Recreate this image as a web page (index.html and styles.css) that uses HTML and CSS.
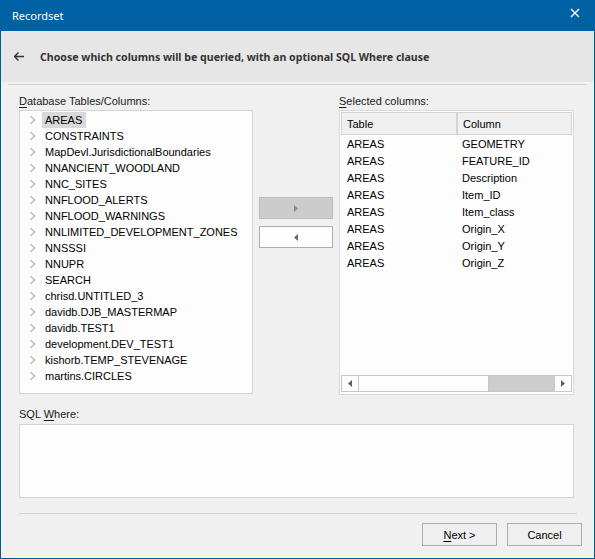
FILE: index.html
```html
<!DOCTYPE html>
<html lang="en">
  <head>
    <meta charset="UTF-8" />
    <title>Recordset</title>
    <link rel="stylesheet" href="styles.css">
  </head>
  <body>
    <div class="window">
      <div class="titlebar">
        <span class="title">Recordset</span>
        <svg class="close" width="10" height="10" viewBox="0 0 10 10">
          <path d="M1 1 L9 9 M9 1 L1 9" stroke="#fff" stroke-width="1.4" fill="none" />
        </svg>
      </div>
      <div class="banner">
        <svg class="back" width="10" height="9" viewBox="0 0 10 9">
          <path d="M0.5 4.5 H10 M4.5 0.5 L0.5 4.5 L4.5 8.5" stroke="#333" stroke-width="1.4" fill="none" />
        </svg>
        <span class="banner-text">Choose which columns will be queried, with an optional SQL Where clause</span>
      </div>
      <div class="rule"></div>
      <div class="content">
        <div class="pickers">
          <div class="pane">
            <div class="label"><u>D</u>atabase Tables/Columns:</div>
            <ul class="tree">
              <li><span class="chev"></span><span class="node selected">AREAS</span></li>
              <li><span class="chev"></span><span class="node">CONSTRAINTS</span></li>
              <li><span class="chev"></span><span class="node">MapDevl.JurisdictionalBoundaries</span></li>
              <li><span class="chev"></span><span class="node">NNANCIENT_WOODLAND</span></li>
              <li><span class="chev"></span><span class="node">NNC_SITES</span></li>
              <li><span class="chev"></span><span class="node">NNFLOOD_ALERTS</span></li>
              <li><span class="chev"></span><span class="node">NNFLOOD_WARNINGS</span></li>
              <li><span class="chev"></span><span class="node">NNLIMITED_DEVELOPMENT_ZONES</span></li>
              <li><span class="chev"></span><span class="node">NNSSSI</span></li>
              <li><span class="chev"></span><span class="node">NNUPR</span></li>
              <li><span class="chev"></span><span class="node">SEARCH</span></li>
              <li><span class="chev"></span><span class="node">chrisd.UNTITLED_3</span></li>
              <li><span class="chev"></span><span class="node">davidb.DJB_MASTERMAP</span></li>
              <li><span class="chev"></span><span class="node">davidb.TEST1</span></li>
              <li><span class="chev"></span><span class="node">development.DEV_TEST1</span></li>
              <li><span class="chev"></span><span class="node">kishorb.TEMP_STEVENAGE</span></li>
              <li><span class="chev"></span><span class="node">martins.CIRCLES</span></li>
            </ul>
          </div>
          <div class="movers">
            <button class="mover disabled">
              <svg width="4" height="7" viewBox="0 0 4 7"><path d="M0 0 L4 3.5 L0 7 Z" fill="#8c8c8c" /></svg>
            </button>
            <button class="mover">
              <svg width="4" height="7" viewBox="0 0 4 7"><path d="M4 0 L0 3.5 L4 7 Z" fill="#6a6a6a" /></svg>
            </button>
          </div>
          <div class="pane">
            <div class="label"><u>S</u>elected columns:</div>
            <div class="grid">
              <div class="grid-head">
                <div class="head-cell col-table">Table</div>
                <div class="head-cell col-column">Column</div>
              </div>
              <div class="grid-body">
                <div class="row"><span class="col-table">AREAS</span><span class="col-column">GEOMETRY</span></div>
                <div class="row"><span class="col-table">AREAS</span><span class="col-column">FEATURE_ID</span></div>
                <div class="row"><span class="col-table">AREAS</span><span class="col-column">Description</span></div>
                <div class="row"><span class="col-table">AREAS</span><span class="col-column">Item_ID</span></div>
                <div class="row"><span class="col-table">AREAS</span><span class="col-column">Item_class</span></div>
                <div class="row"><span class="col-table">AREAS</span><span class="col-column">Origin_X</span></div>
                <div class="row"><span class="col-table">AREAS</span><span class="col-column">Origin_Y</span></div>
                <div class="row"><span class="col-table">AREAS</span><span class="col-column">Origin_Z</span></div>
              </div>
              <div class="hscroll">
                <div class="sb-arrow">
                  <svg width="4" height="7" viewBox="0 0 4 7"><path d="M4 0 L0 3.5 L4 7 Z" fill="#606060" /></svg>
                </div>
                <div class="sb-thumb"></div>
                <div class="sb-track"></div>
                <div class="sb-arrow">
                  <svg width="4" height="7" viewBox="0 0 4 7"><path d="M0 0 L4 3.5 L0 7 Z" fill="#606060" /></svg>
                </div>
              </div>
            </div>
          </div>
        </div>
        <div class="label where-label">SQL <u>W</u>here:</div>
        <div class="where-box"></div>
      </div>
      <div class="footer-rule"></div>
      <div class="footer">
        <button class="btn"><u>N</u>ext &gt;</button>
        <button class="btn">Cancel</button>
      </div>
    </div>
  </body>
</html>
```

FILE: styles.css
```css
body {
  margin: 0;
  font-family: "Liberation Sans", Arial, sans-serif;
  font-size: 11px;
  color: #1a1a1a;
}
.window {
  width: 595px;
  height: 559px;
  box-sizing: border-box;
  border: 1px solid #005a94;
  border-top: none;
  background: #f0f0f0;
  display: flex;
  flex-direction: column;
}
.titlebar {
  height: 31px;
  margin: 0 -1px;
  padding: 0 15px 0 12px;
  background: #0062a3;
  color: #fff;
  display: flex;
  align-items: center;
  justify-content: space-between;
  font-family: "Noto Sans", sans-serif;
  font-size: 11px;
}
.close {
  margin-top: -6px;
}
.banner {
  height: 51px;
  background: #e6e6e6;
  display: flex;
  align-items: center;
  padding-left: 13px;
}
.back {
  margin-right: 16px;
}
.banner-text {
  font-family: "Noto Sans", sans-serif;
  font-weight: bold;
  font-size: 10.6px;
  color: #333;
}
.rule {
  height: 1px;
  margin: 2px 7px 0 7px;
  background: #d2d2d2;
}
.content {
  padding: 9px 20px 0 18px;
}
.label {
  height: 14px;
  line-height: 14px;
  margin-bottom: 2px;
}
.label u {
  text-underline-offset: 2px;
}
.pickers {
  display: flex;
  gap: 6px;
}
.pane {
  display: flex;
  flex-direction: column;
}
.tree {
  width: 234px;
  height: 284px;
  box-sizing: border-box;
  margin: 0;
  padding: 1px 0 0 0;
  list-style: none;
  background: #fdfdfd;
  border: 1px solid #d4d4d4;
  color: #000;
}
.tree li {
  height: 16px;
  display: flex;
  align-items: center;
}
.chev {
  width: 5px;
  height: 5px;
  margin: 0 8px 0 8px;
  border-right: 1.3px solid #a6a6a6;
  border-top: 1.3px solid #a6a6a6;
  transform: rotate(45deg);
}
.node {
  padding: 0 4px 0 3px;
  line-height: 16px;
}
.node.selected {
  background: #d9d9d9;
}
.movers {
  width: 74px;
  padding-top: 103px;
  display: flex;
  flex-direction: column;
  gap: 7px;
}
.mover {
  height: 22px;
  box-sizing: border-box;
  border: 1px solid #adadad;
  background: #fdfdfd;
  padding: 0;
  display: flex;
  align-items: center;
  justify-content: center;
}
.mover.disabled {
  background: #cccccc;
  border-color: #bcbcbc;
}
.grid {
  width: 235px;
  height: 285px;
  box-sizing: border-box;
  border: 1px solid #d9d9d9;
  background: #fdfdfd;
  padding: 1px;
  display: flex;
  flex-direction: column;
  color: #000;
}
.grid-head {
  display: flex;
  height: 21px;
  background: #f0f0f0;
  border: 1px solid #d4d4d4;
}
.head-cell {
  display: flex;
  align-items: center;
  padding-left: 5px;
}
.head-cell.col-table {
  width: 109px;
  border-right: 2px solid #d4d4d4;
}
.grid-body {
  flex: 1;
}
.row {
  height: 17px;
  display: flex;
  align-items: center;
}
.row .col-table {
  width: 115px;
  padding-left: 6px;
}
.hscroll {
  height: 17px;
  margin-bottom: 1px;
  display: flex;
  border: 1px solid #c8c8c8;
  box-sizing: border-box;
}
.sb-arrow {
  width: 16px;
  display: flex;
  align-items: center;
  justify-content: center;
  background: #fdfdfd;
}
.sb-thumb {
  width: 129px;
  background: #fdfdfd;
  border-left: 1px solid #c8c8c8;
  border-right: 1px solid #c8c8c8;
}
.sb-track {
  flex: 1;
  background: #cdcdcd;
  border-right: 1px solid #c8c8c8;
}
.where-label {
  margin-top: 12px;
  margin-bottom: 3px;
}
.where-box {
  height: 74px;
  box-sizing: border-box;
  border: 1px solid #d4d4d4;
  background: #fdfdfd;
}
.footer-rule {
  height: 1px;
  margin: 15px 17px 0 18px;
  background: #d2d2d2;
}
.footer {
  display: flex;
  justify-content: flex-end;
  gap: 10px;
  padding: 9px 12px 0 0;
}
.btn {
  width: 75px;
  height: 23px;
  border: 1px solid #adadad;
  background: #efefef;
  font-family: "Liberation Sans", Arial, sans-serif;
  font-size: 11px;
  color: #000;
  padding: 0;
}
.btn u {
  text-underline-offset: 2px;
}
```
